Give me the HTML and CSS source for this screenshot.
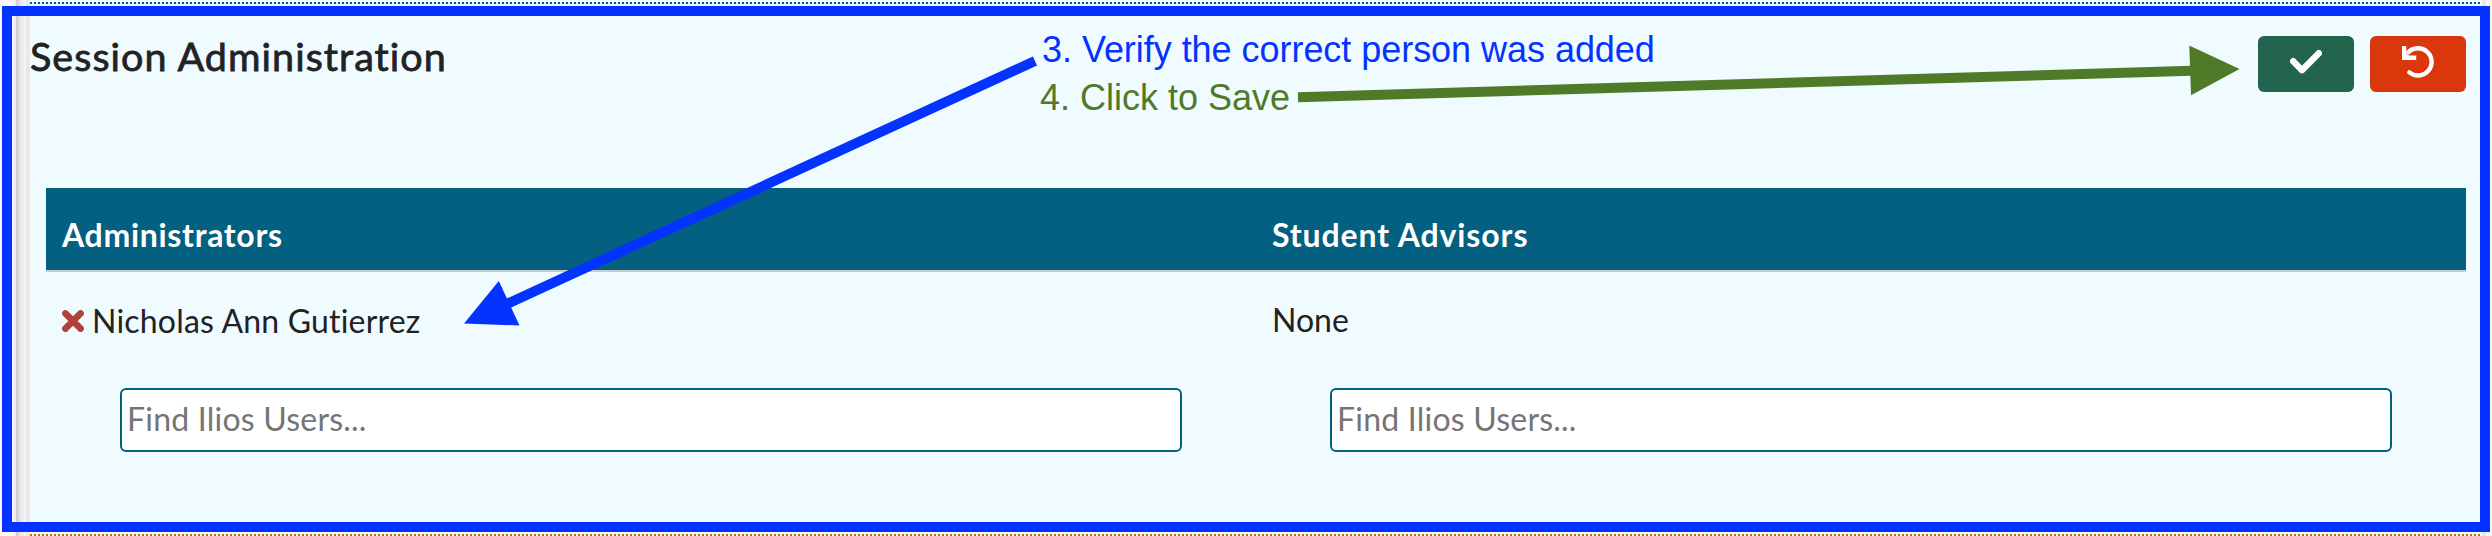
FILE: index.html
```html
<!DOCTYPE html>
<html lang="en">
<head>
<meta charset="utf-8">
<title>Session Administration</title>
<link rel="stylesheet" href="styles.css">
</head>
<body>
<div class="page">
  <div class="gutter"></div>
  <section class="panel">
    <header class="panel-header">
      <h2 class="title">Session Administration</h2>
      <div class="actions">
        <button class="btn save" aria-label="Save">
          <svg class="check" viewBox="0 0 32 24"><path d="M3.2 11.2 L12 20.2 L28.8 3.2"/></svg>
        </button>
        <button class="btn undo" aria-label="Cancel">
          <svg class="revert" viewBox="0 0 32 32"><path class="arc" d="M6.2 6.5 A13.6 13.6 0 1 1 7.4 26.4"/><path class="tip" d="M0 0h4.3v7.4l2.6 2.2h7.3v4.4H0z"/></svg>
        </button>
      </div>
    </header>
    <div class="grid">
      <div class="head">Administrators</div>
      <div class="head advisors">Student Advisors</div>
      <div class="cell">
        <div class="person">
          <svg class="remove" viewBox="0 0 22 22"><path d="M3.4 3.4 L18.6 18.6 M18.6 3.4 L3.4 18.6"/></svg>
          <span class="name">Nicholas Ann Gutierrez</span>
        </div>
        <input class="search" type="text" placeholder="Find Ilios Users...">
      </div>
      <div class="cell">
        <div class="person none">None</div>
        <input class="search" type="text" placeholder="Find Ilios Users...">
      </div>
    </div>
  </section>
  <div class="edge"></div>
  <div class="frame"></div>
  <svg class="arrows" viewBox="0 0 2492 536">
    <g class="blue"><path d="M1035 61 L505 304.8"/><polygon points="464,323.5 498.8,281 519.5,325.5"/></g>
    <g class="green"><path d="M1298 97.3 L2192 70.8"/><polygon points="2239.5,69 2189.3,45.5 2191,95.3"/></g>
  </svg>
  <div class="note verify">3. Verify the correct person was added</div>
  <div class="note click">4. Click to Save</div>
</div>
</body>
</html>
```
FILE: styles.css
```css
* { box-sizing: border-box; }
body { margin: 0; background: #fafafa; color: #222; font: 32px/40px Lato, "Open Sans", sans-serif; font-variant-ligatures: none; }
.page { position: relative; display: flex; width: 2492px; height: 536px; overflow: hidden; }
.gutter { flex: none; width: 30px; background: linear-gradient(90deg, #fafafa 0 13px, #f0eeee 14px 16px, #cacaca 16px, #e6e6e6 20px, #f7f7f7 26px, #e9e9e9 26px 30px); }
.panel {
  flex: 1; min-width: 0; padding: 36px 16px 0 0; background-color: #f0fbff;
  background-image: repeating-linear-gradient(90deg, #006080 0 2px, transparent 2px 4px), repeating-linear-gradient(90deg, #c60 0 2px, transparent 2px 4px);
  background-size: 100% 2px; background-position: 0 2px, 0 534px; background-repeat: no-repeat;
}
.edge { flex: none; width: 10px; background: linear-gradient(90deg, #e9e9e9 0 4px, #fafafa 4px); }
.panel-header { display: flex; justify-content: space-between; height: 152px; }
.title { margin: 0; font-size: 39.5px; line-height: 39px; font-weight: 400; letter-spacing: 1.05px; -webkit-text-stroke: .8px #222; }
.actions { display: flex; gap: 16px; }
.btn { display: flex; justify-content: center; width: 96px; height: 56px; padding: 0; border: 0; border-radius: 6px; }
.save { background: #22644e; }
.undo { background: #db370c; }
.check { width: 32px; height: 24px; margin-top: 14px; fill: none; stroke: #fff; stroke-width: 6.4; stroke-linecap: round; stroke-linejoin: round; }
.revert { width: 32px; height: 32px; margin-top: 10px; fill: #fff; }
.arc { fill: none; stroke: #fff; stroke-width: 4.4; stroke-linecap: round; }
.grid { display: grid; grid-template-columns: 1fr 1fr; margin-left: 16px; }
.head { height: 84px; padding: 27px 16px 0; background: #036080; border-bottom: 2px solid #ccc; color: #fff; font-weight: 700; letter-spacing: .7px; }
.advisors { letter-spacing: .9px; }
.cell { padding: 29px 16px 0; }
.person { display: flex; align-items: center; height: 42px; gap: 8px; }
.name { position: relative; top: -1px; letter-spacing: .2px; }
.none { padding-bottom: 5px; }
.remove { width: 22px; height: 22px; fill: none; stroke: #b0413e; stroke-width: 6.6; stroke-linecap: round; position: relative; top: -1px; }
.search { display: block; width: 1062px; height: 64px; margin: 45px 0 0 58px; padding: 0 5px 4px; border: 2px solid #006080; border-radius: 6px; background: #fff; font: inherit; letter-spacing: .22px; }
.search::placeholder { color: #757575; opacity: 1; }
.frame { position: absolute; inset: 6px 2px 4px 2px; border: 10px solid #0433ff; }
.arrows { position: absolute; inset: 0; width: 2492px; height: 536px; }
.arrows path { stroke-width: 10; }
.blue { fill: #0433ff; }
.blue path { stroke: #0433ff; }
.green { fill: #4f7a28; }
.green path { stroke: #4f7a28; }
.note { position: absolute; font: 36px/40px "Liberation Sans", Arial, sans-serif; white-space: nowrap; }
.verify { left: 1042px; top: 30px; color: #0433ff; letter-spacing: -.04px; }
.click { left: 1040px; top: 78px; color: #4f7a28; }
```
